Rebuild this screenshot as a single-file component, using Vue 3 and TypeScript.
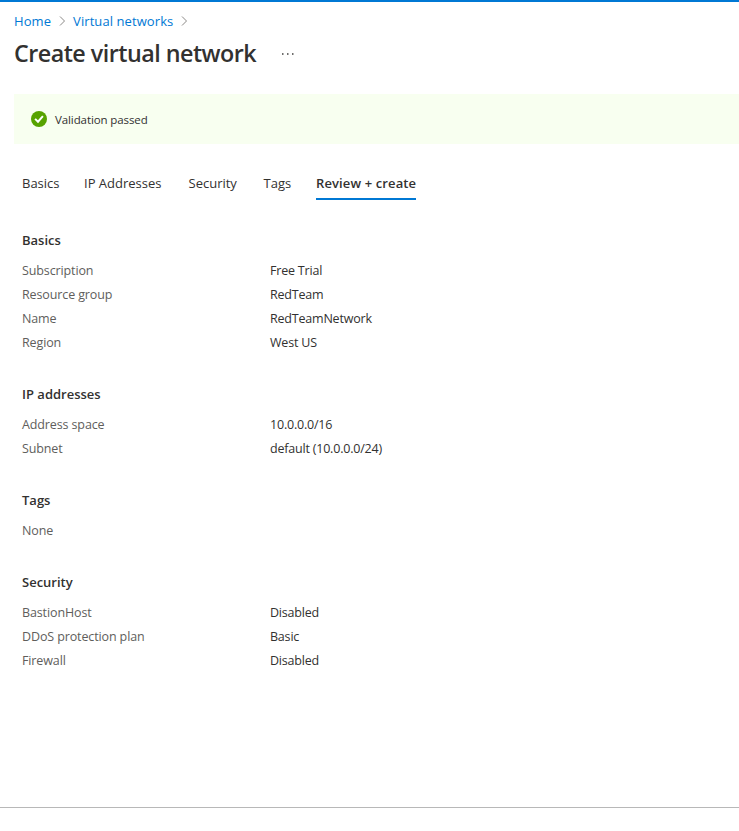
<script setup lang="ts">
interface Row {
  label: string
  value?: string
}
interface Section {
  title: string
  rows: Row[]
}

const crumbs: string[] = ['Home', 'Virtual networks']
const tabs: string[] = ['Basics', 'IP Addresses', 'Security', 'Tags', 'Review + create']
const activeTab = 'Review + create'

const sections: Section[] = [
  {
    title: 'Basics',
    rows: [
      { label: 'Subscription', value: 'Free Trial' },
      { label: 'Resource group', value: 'RedTeam' },
      { label: 'Name', value: 'RedTeamNetwork' },
      { label: 'Region', value: 'West US' },
    ],
  },
  {
    title: 'IP addresses',
    rows: [
      { label: 'Address space', value: '10.0.0.0/16' },
      { label: 'Subnet', value: 'default (10.0.0.0/24)' },
    ],
  },
  { title: 'Tags', rows: [{ label: 'None' }] },
  {
    title: 'Security',
    rows: [
      { label: 'BastionHost', value: 'Disabled' },
      { label: 'DDoS protection plan', value: 'Basic' },
      { label: 'Firewall', value: 'Disabled' },
    ],
  },
]
</script>

<template>
  <div class="page">
    <nav class="crumbs">
      <template v-for="crumb in crumbs" :key="crumb">
        <a class="crumb">{{ crumb }}</a>
        <svg class="chevron" width="7" height="10" viewBox="0 0 7 10">
          <path d="M1 0.5L5.5 5L1 9.5" fill="none" stroke="#8a8886" stroke-width="1" />
        </svg>
      </template>
    </nav>

    <header class="heading">
      <h1 class="title">Create virtual network</h1>
      <svg class="more" width="12" height="2" viewBox="0 0 12 2">
        <rect x="0" y="0.3" width="1.5" height="1.4" />
        <rect x="5" y="0.3" width="1.5" height="1.4" />
        <rect x="10" y="0.3" width="1.5" height="1.4" />
      </svg>
    </header>

    <div class="banner">
      <svg class="check" width="16" height="16" viewBox="0 0 16 16">
        <circle cx="8" cy="8" r="8" fill="#57a300" />
        <path d="M4.1 7.9L7 10.7L11.9 5.2" fill="none" stroke="#fff" stroke-width="2" />
      </svg>
      <span>Validation passed</span>
    </div>

    <div class="tabs">
      <div v-for="tab in tabs" :key="tab" class="tab">
        <span class="tab-text" :class="{ active: tab === activeTab }">{{ tab }}</span>
      </div>
    </div>

    <main class="summary">
      <section v-for="section in sections" :key="section.title" class="section">
        <h2 class="section-title">{{ section.title }}</h2>
        <div v-for="row in section.rows" :key="row.label" class="row">
          <span class="label">{{ row.label }}</span>
          <span class="value">{{ row.value }}</span>
        </div>
      </section>
    </main>

    <footer class="footer"></footer>
  </div>
</template>

<style>
body {
  background: #fff;
}
</style>

<style scoped>
.page {
  box-sizing: border-box;
  width: 100%;
  height: 831px;
  display: flex;
  flex-direction: column;
  overflow: hidden;
  border-top: 2px solid #0078d4;
  font-family: 'Segoe UI', 'Open Sans', 'Noto Sans', sans-serif;
  font-size: 12.5px;
  color: #323130;
}
.crumbs {
  display: flex;
  align-items: center;
  height: 20px;
  margin-top: 9px;
  padding-left: 14px;
  font-size: 13px;
  letter-spacing: 0.08px;
}
.crumb {
  color: #0078d4;
  white-space: nowrap;
}
.chevron {
  margin: 0 7px 0 8px;
}
.heading {
  display: flex;
  align-items: center;
  height: 32px;
  margin-top: 7px;
  padding-left: 14px;
}
.title {
  position: relative;
  top: -1px;
  width: 268px;
  margin: 0;
  font-size: 23.3px;
  font-weight: 600;
  letter-spacing: -0.52px;
  line-height: 32px;
  white-space: nowrap;
}
.more {
  fill: #323130;
}
.banner {
  box-sizing: border-box;
  display: flex;
  align-items: center;
  gap: 8px;
  height: 50px;
  margin: 24px 0 0 14px;
  padding-left: 17px;
  background: #f8fff0;
  font-size: 11.5px;
  letter-spacing: -0.1px;
}
.tabs {
  display: grid;
  grid-template-columns: 62px 104.5px 75px 52.5px 100px;
  height: 32px;
  margin: 24px 0 0 22px;
  font-size: 13px;
}
.tab-text {
  box-sizing: border-box;
  display: inline-block;
  height: 32px;
  line-height: 30px;
  white-space: nowrap;
}
.active {
  width: 100px;
  border-bottom: 2px solid #0078d4;
  font-weight: 600;
  letter-spacing: 0.12px;
}
.summary {
  flex: 1;
  padding: 28px 0 0 22px;
}
.section {
  margin-bottom: 27px;
}
.section-title {
  margin: 0 0 7px;
  font-size: 13px;
  font-weight: 600;
  line-height: 24px;
}
.row {
  display: grid;
  grid-template-columns: 248px 1fr;
  letter-spacing: -0.12px;
  line-height: 24px;
}
.value {
  letter-spacing: -0.2px;
}
.label {
  color: #605e5c;
}
.footer {
  height: 23px;
  border-top: 1px solid #b8b8b8;
}
</style>
